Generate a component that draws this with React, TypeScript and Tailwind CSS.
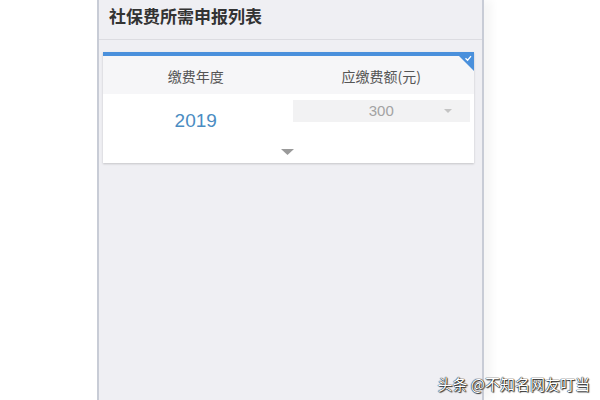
const cjk = { fontFamily: '"Noto Sans CJK SC", "Liberation Sans", sans-serif' };
const latin = { fontFamily: '"Liberation Sans", Arial, sans-serif' };

function RecordCard() {
  return (
    <div className="relative ml-[4px] mt-[12px] w-[371px] border-t-4 border-[#4a90dc] bg-white shadow-[0_1px_2px_rgba(0,0,0,0.18)]">
      {/* corner check badge */}
      <svg className="absolute -top-1 right-0" width="19" height="19" viewBox="0 0 19 19">
        <polygon points="0,0 19,0 19,19" fill="#4a90dc" />
        <path d="M10.5 6.2 L12.6 8.2 L16 4.2" fill="none" stroke="#fff" strokeWidth="1.3" />
      </svg>

      <div className="grid h-[38px] grid-cols-2 bg-[#f6f6f8] text-[14px] text-[#555]">
        <div className="flex items-center justify-center pt-[3px]">缴费年度</div>
        <div className="flex items-center justify-center pt-[3px]">应缴费额(元)</div>
      </div>

      <div className="grid h-[69px] grid-cols-2">
        <div className="flex items-start justify-center pt-[13px] text-[19px] text-[#4a8cc2]" style={latin}>
          2019
        </div>
        <div className="pl-[4px] pr-[4px] pt-[6px]">
          <div className="relative flex h-[22px] items-center justify-center bg-[#f2f2f3] text-[15px] text-[#a3a3a3]" style={latin}>
            300
            <svg className="absolute right-[18px] top-[9px]" width="8" height="5" viewBox="0 0 8 5">
              <polygon points="0,0 8,0 4,4" fill="#c4c4c4" />
            </svg>
          </div>
        </div>
      </div>

      <svg className="absolute bottom-[7px] left-[178px]" width="13" height="7" viewBox="0 0 13 7">
        <polygon points="0,0 13,0 6.5,6" fill="#9a9a9a" />
      </svg>
    </div>
  );
}

export default function App() {
  return (
    <div className="relative h-[400px] w-[600px] overflow-hidden bg-white" style={cjk}>
      <div className="ml-[97px] h-[400px] w-[387px] border-x-2 border-[#c8ccd6] bg-[#efeff3] shadow-[8px_0_8px_rgba(0,0,0,0.04)]">
        <div className="flex h-[40px] items-center border-b border-[#dcdce1] pb-[8px] pl-[10px] text-[17px] font-bold text-[#333]">
          社保费所需申报列表
        </div>
        <RecordCard />
      </div>

      <div
        className="absolute bottom-[9px] right-[10px] text-[15px] leading-none text-white"
        style={{ textShadow: '0 0 1px #000, 0 0 1px #000, 1px 1px 1px #333' }}
      >
        头条 @不知名网友叮当
      </div>
    </div>
  );
}
